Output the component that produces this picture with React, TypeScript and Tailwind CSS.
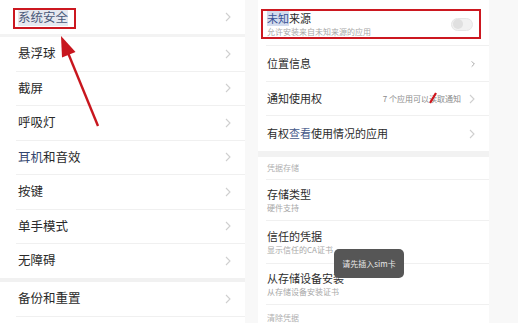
import React from "react";

const FONT = { fontFamily: '"Noto Sans CJK SC", "Noto Sans", sans-serif' };

const Chevron = ({ className = "" }: { className?: string }) => (
  <svg width="6" height="10" viewBox="0 0 6 10" className={className}>
    <path d="M1 1 L5 5 L1 9" fill="none" stroke="currentColor" strokeWidth="1.1" />
  </svg>
);

const leftRows: React.ReactNode[] = [
  "悬浮球",
  "截屏",
  "呼吸灯",
  <>
    <span className="text-[#34466f]">耳机</span>和音效
  </>,
  "按键",
  "单手模式",
  "无障碍",
];

const LeftRow = ({ label }: { label: React.ReactNode }) => (
  <div className="h-[33.5px] shrink-0 flex items-center justify-between pl-[18px] pr-[14px] bg-white">
    <span className="text-[12.5px] text-[#2a2a2a]">{label}</span>
    <Chevron className="text-[#cfcfcf]" />
  </div>
);

const Divider = () => <div className="h-px shrink-0 bg-[#f0f0f0] ml-[16px]" />;
const RDivider = () => <div className="h-px shrink-0 bg-[#f0f0f0] ml-[8px]" />;

const SubRow = ({ title, sub, h }: { title: React.ReactNode; sub: string; h: string }) => (
  <div className={`${h} shrink-0 flex flex-col justify-center pl-[9px] bg-white`}>
    <span className="text-[11px] leading-[14px] text-[#2b2b2b]">{title}</span>
    <span className="text-[8px] leading-[11px] mt-px text-[#a8a8a8]">{sub}</span>
  </div>
);

export default function App() {
  return (
    <div className="relative w-[518px] h-[323px] overflow-hidden bg-[#f8f8f8] flex" style={FONT}>
      {/* left screen */}
      <div className="w-[245px] shrink-0 flex flex-col bg-white *:shrink-0">
        <div className="h-[34px] flex items-center justify-between pl-[18px] pr-[14px]">
          <span className="text-[12.5px] text-[#4a5878] bg-[#e6e9f0]">系统安全</span>
          <Chevron className="text-[#cfcfcf]" />
        </div>
        <div className="h-[3px] bg-[#f3f3f3]" />
        {leftRows.map((label, i) => (
          <React.Fragment key={i}>
            {i > 0 && <Divider />}
            <LeftRow label={label} />
          </React.Fragment>
        ))}
        <div className="h-[4.5px] bg-[#f1f1f1]" />
        <LeftRow label="备份和重置" />
        <Divider />
        <LeftRow label="关于手机" />
      </div>

      <div className="w-[13px] shrink-0" />

      {/* right screen */}
      <div className="w-[231px] shrink-0 flex flex-col bg-white *:shrink-0">
        <div className="h-[3px]" />
        <div className="h-[42px] flex items-center justify-between pl-[9px] pr-[16px]">
          <div className="flex flex-col">
            <span className="text-[11px] leading-[14px] text-[#2b2b2b]">
              <span className="text-[#3a5396] bg-[#d3dcee]">未知</span>来源
            </span>
            <span className="text-[8px] leading-[11px] mt-px text-[#a8a8a8]">允许安装来自未知来源的应用</span>
          </div>
          <div className="w-[22px] h-[13px] rounded-full bg-[#f1f1f1] border border-[#e6e6e6] flex items-center px-px">
            <div className="w-[10px] h-[10px] rounded-full bg-[#e0e0e0]" />
          </div>
        </div>
        <RDivider />
        <div className="h-[35px] flex items-center justify-between pl-[9px] pr-[14px]">
          <span className="text-[11px] text-[#2b2b2b]">位置信息</span>
          <Chevron className="text-[#888] w-[4px]" />
        </div>
        <RDivider />
        <div className="h-[33px] flex items-center justify-between pl-[9px] pr-[14px]">
          <span className="text-[11px] text-[#2b2b2b]">通知使用权</span>
          <div className="flex items-center gap-[8px]">
            <span className="text-[8px] text-[#8a8a8a]">
              7 个应用可以
              <span className="relative">
                读
                <svg className="absolute left-[-1px] top-[-1px]" width="10" height="12" viewBox="0 0 10 12">
                  <path d="M2 11 L8 1" stroke="#d0141c" strokeWidth="2.2" />
                </svg>
              </span>
              取通知
            </span>
            <Chevron className="text-[#cfcfcf]" />
          </div>
        </div>
        <RDivider />
        <div className="h-[35px] flex items-center justify-between pl-[9px] pr-[14px]">
          <span className="text-[11px] text-[#2b2b2b]">
            有权<span className="text-[#45598a]">查看</span>使用情况的应用
          </span>
          <Chevron className="text-[#cfcfcf]" />
        </div>
        <div className="h-[6px] bg-[#f2f2f2]" />
        <div className="h-[22px] flex items-center pl-[9px]">
          <span className="text-[8px] text-[#b0b0b0]">凭据存储</span>
        </div>
        <RDivider />
        <SubRow title="存储类型" sub="硬件支持" h="h-[40px]" />
        <RDivider />
        <SubRow title="信任的凭据" sub="显示信任的CA证书" h="h-[42px]" />
        <RDivider />
        <SubRow title="从存储设备安装" sub="从存储设备安装证书" h="h-[40px]" />
        <RDivider />
        <div className="h-[26px] flex items-center pl-[9px]">
          <span className="text-[8px] text-[#b0b0b0]">清除凭据</span>
        </div>
      </div>

      {/* annotations */}
      <div className="absolute left-[13px] top-[8px] w-[63px] h-[21px] border-2 border-[#cc1820]" />
      <div className="absolute left-[261px] top-[9px] w-[220px] h-[30px] border-2 border-[#cc1820]" />
      <svg className="absolute left-0 top-0" width="518" height="323" viewBox="0 0 518 323">
        <path d="M98 126 L66 48" stroke="#c8161e" strokeWidth="2.4" />
        <path d="M61 36 L75.5 52 L62 57.5 Z" fill="#c8161e" />
      </svg>

      <div className="absolute left-[334px] top-[249px] w-[70px] h-[29px] rounded-[5px] bg-[#565656] flex items-center justify-center">
        <span className="text-[8px] text-[#e8e8e8]">请先插入sim卡</span>
      </div>
    </div>
  );
}
